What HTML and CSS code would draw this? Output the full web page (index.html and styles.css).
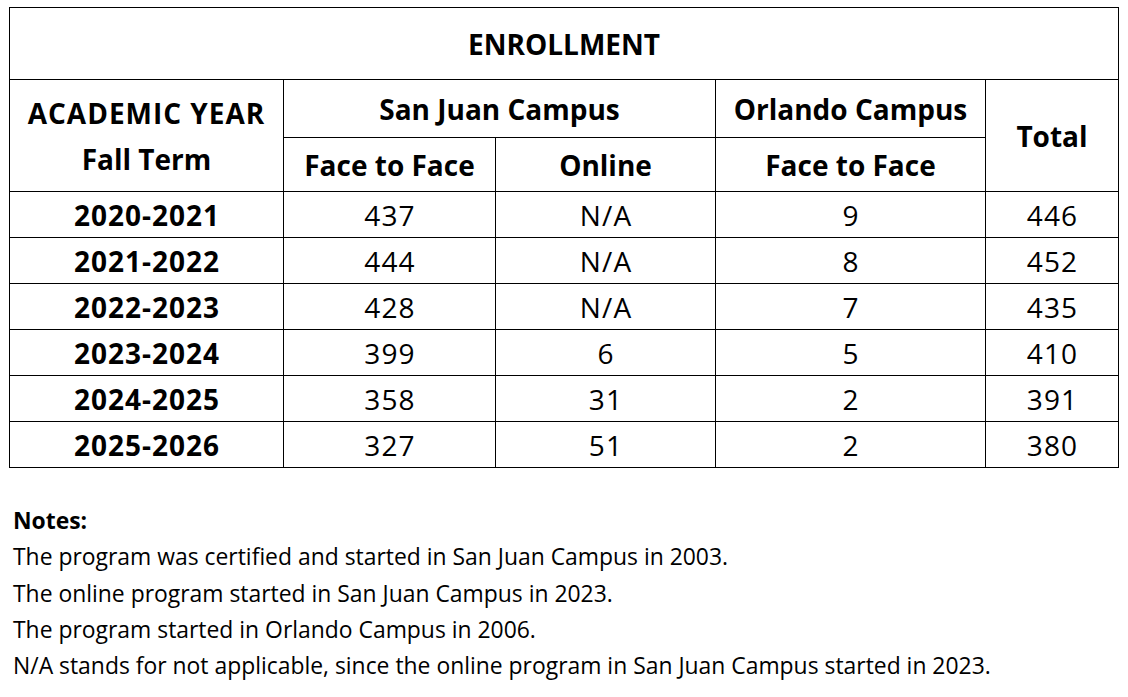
FILE: index.html
```html
<!DOCTYPE html>
<html lang="en">
<head>
<meta charset="utf-8">
<title>Enrollment</title>
<link rel="stylesheet" href="styles.css">
</head>
<body>
<main class="page">
  <div class="table" role="table" aria-label="Enrollment">
    <div class="cell title">ENROLLMENT</div>
    <div class="cell head year"><span><span class="wide">ACADEMIC YEAR</span><br>Fall Term</span></div>
    <div class="cell head sanjuan">San Juan Campus</div>
    <div class="cell head">Orlando Campus</div>
    <div class="cell head total">Total</div>
    <div class="cell head">Face to Face</div>
    <div class="cell head">Online</div>
    <div class="cell head">Face to Face</div>

    <div class="cell label">2020-2021</div><div class="cell num">437</div><div class="cell num">N/A</div><div class="cell num">9</div><div class="cell num">446</div>
    <div class="cell label">2021-2022</div><div class="cell num">444</div><div class="cell num">N/A</div><div class="cell num">8</div><div class="cell num">452</div>
    <div class="cell label">2022-2023</div><div class="cell num">428</div><div class="cell num">N/A</div><div class="cell num">7</div><div class="cell num">435</div>
    <div class="cell label">2023-2024</div><div class="cell num">399</div><div class="cell num">6</div><div class="cell num">5</div><div class="cell num">410</div>
    <div class="cell label">2024-2025</div><div class="cell num">358</div><div class="cell num">31</div><div class="cell num">2</div><div class="cell num">391</div>
    <div class="cell label">2025-2026</div><div class="cell num">327</div><div class="cell num">51</div><div class="cell num">2</div><div class="cell num">380</div>
  </div>

  <section class="notes">
    <p class="notes-title">Notes:</p>
    <p>The program was certified and started in San Juan Campus in 2003.</p>
    <p>The online program started in San Juan Campus in 2023.</p>
    <p>The program started in Orlando Campus in 2006.</p>
    <p>N/A stands for not applicable, since the online program in San Juan Campus started in 2023.</p>
  </section>
</main>
</body>
</html>
```

FILE: styles.css
```css
html, body {
  margin: 0;
  padding: 0;
  background: #ffffff;
}

body {
  font-family: "Open Sans", "Noto Sans", sans-serif;
  color: #000000;
}

.page {
  padding: 7px 0 0 9px;
}

.table {
  display: grid;
  width: max-content;
  grid-template-columns: 273px 211px 219px 269px 132px;
  grid-template-rows: 71px 57px 53px repeat(6, 45px);
  gap: 1px;
  background: #000000;
  border: 1px solid #000000;
}

.cell {
  background: #ffffff;
  display: flex;
  align-items: center;
  justify-content: center;
  text-align: center;
  font-size: 28px;
  line-height: 36px;
  white-space: nowrap;
}

.title {
  grid-column: 1 / span 5;
  font-weight: 700;
}

.head {
  font-weight: 700;
}

.year {
  grid-row: span 2;
  line-height: 46px;
}

.wide {
  letter-spacing: 1px;
}

.sanjuan {
  grid-column: span 2;
}

.total {
  grid-row: span 2;
}

.label {
  font-weight: 700;
  letter-spacing: 1px;
  padding-left: 1px;
}

.num {
  letter-spacing: 1.2px;
  padding-left: 1px;
}

.notes {
  margin-top: 35px;
  padding-left: 4px;
  font-size: 22.9px;
  line-height: 36.3px;
}

.notes p {
  margin: 0;
  white-space: nowrap;
}

.notes .notes-title {
  font-weight: 700;
}
```
